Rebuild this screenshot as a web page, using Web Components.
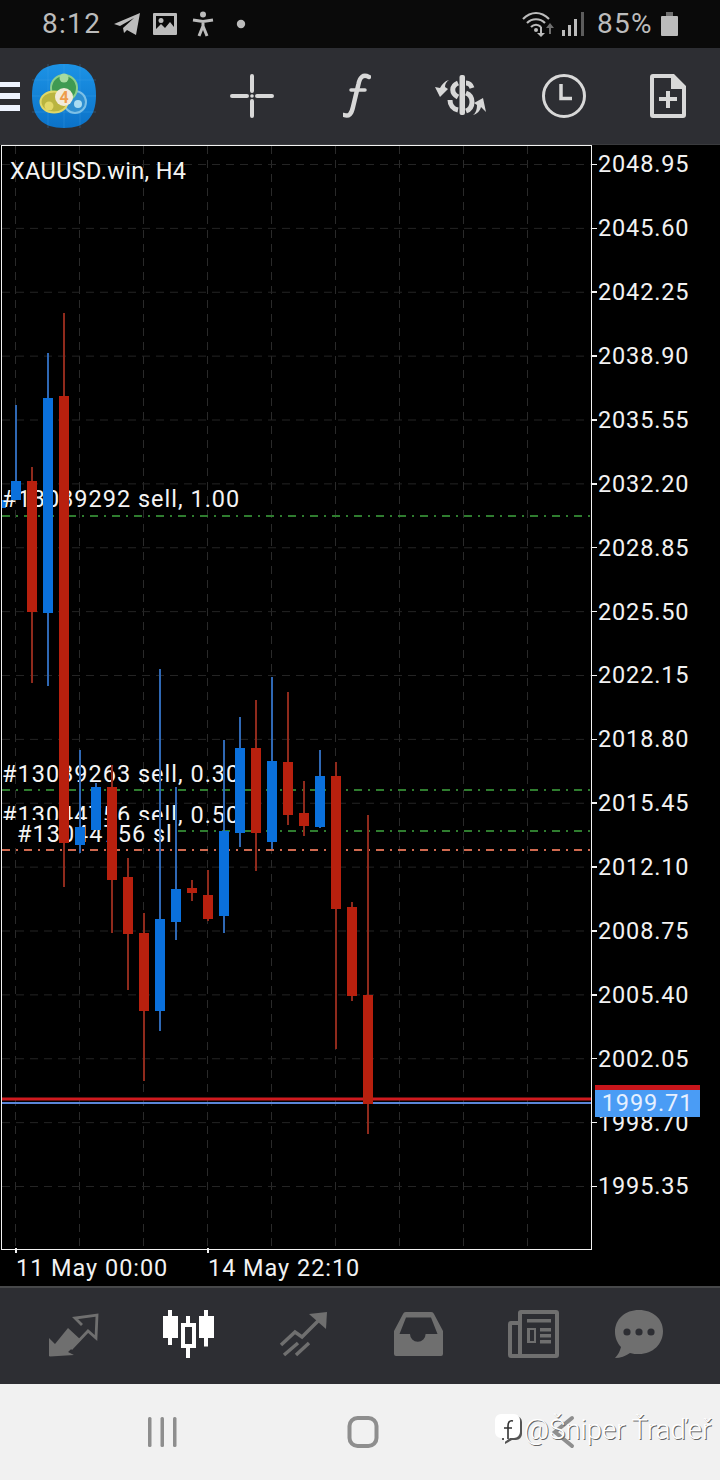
<!DOCTYPE html>
<html>
<head>
<meta charset="utf-8">
<style>
html,body{margin:0;padding:0;background:#000;}
body{width:720px;height:1480px;overflow:hidden;font-family:Roboto,"Liberation Sans",sans-serif;}
</style>
</head>
<body>
<mt-app>
  <status-bar></status-bar>
  <tool-bar></tool-bar>
  <chart-view></chart-view>
  <tab-bar></tab-bar>
  <nav-bar></nav-bar>
</mt-app>
<script>
class MtApp extends HTMLElement{
  constructor(){
    super();
    this.attachShadow({mode:'open'});
    this.shadowRoot.innerHTML=`<style>:host{display:flex;flex-direction:column;width:720px;height:1480px;}</style><slot></slot>`;
  }
}
customElements.define('mt-app',MtApp);

const statusTpl=document.createElement('template');
statusTpl.innerHTML=`
<style>
:host{display:flex;align-items:center;height:48px;background:#0a0a0a;color:#bcbcbc;font:28px Roboto,sans-serif;position:relative;}
.time{margin-left:42px;width:58px;margin-top:-2px;letter-spacing:1.300px;}
svg{display:block;flex:none;}
.pct{margin-left:12px;width:56px;margin-top:-2px;letter-spacing:1.300px;white-space:nowrap;}
</style>
<span class="time">8:12</span>
<svg style="margin-left:14px" width="26" height="22" viewBox="0 0 26 22"><path fill="#bcbcbc" d="M0 11 26 0 22 22 13 17 10 20 9 15 20 5 6 13Z"/></svg>
<svg style="margin-left:13px" width="24" height="22" viewBox="0 0 24 22"><path fill="#bcbcbc" fill-rule="evenodd" d="M1 0H23a1 1 0 0 1 1 1V21a1 1 0 0 1-1 1H1a1 1 0 0 1-1-1V1a1 1 0 0 1 1-1ZM3 3V16L8 11l4 4 5-6 4 5V3Z"/><circle cx="8" cy="7.5" r="2.5" fill="#bcbcbc"/></svg>
<svg style="margin-left:15px" width="22" height="26" viewBox="0 0 22 26"><circle cx="11" cy="3.5" r="3" fill="#bcbcbc"/><path fill="none" stroke="#bcbcbc" stroke-width="3" d="M1 9 11 10.500 21 9M11 10V16M11 15 7 25M11 15 15 25"/></svg>
<svg style="margin-left:22px" width="10" height="10" viewBox="0 0 10 10"><circle cx="5" cy="5" r="4.200" fill="#bcbcbc"/></svg>
<span style="flex:1"></span>
<svg width="33" height="26" viewBox="0 0 33 26"><g fill="none" stroke="#bcbcbc" stroke-width="2.200"><path d="M1 8C9 0 19 0 27 8M5 12C10 7 18 7 23 12M9 16C12 13 16 13 19 16"/></g><circle cx="14" cy="19" r="2" fill="#bcbcbc"/><path fill="#bcbcbc" d="M18 16h2v6h3l-4 4-4-4h3Z"/><path fill="#6f6f6f" d="M28 12l4 5h-3v6h-2v-6h-3Z"/></svg>
<svg style="margin-left:7px" width="23" height="24" viewBox="0 0 23 24"><path fill="#bcbcbc" d="M0 18h3v6H0ZM6 13h3v11H6ZM12 7h3v17h-3Z"/><path fill="#5c5c5c" d="M19 0h3v24h-3Z"/></svg>
<span class="pct">85%</span>
<svg style="margin-left:8px;margin-right:42px" width="17" height="24" viewBox="0 0 17 24"><path fill="#bcbcbc" d="M1 4H16a1 1 0 0 1 1 1V23a1 1 0 0 1-1 1H1a1 1 0 0 1-1-1V5a1 1 0 0 1 1-1Z"/><path fill="#6f6f6f" d="M5 0h7v4H5Z"/></svg>
`;
class StatusBar extends HTMLElement{
  constructor(){
    super();
    this.attachShadow({mode:'open'});
    this.shadowRoot.appendChild(statusTpl.content.cloneNode(true));
  }
}
customElements.define('status-bar',StatusBar);

const toolTpl=document.createElement('template');
toolTpl.innerHTML=`
<style>
:host{display:flex;align-items:center;height:96px;background:#2d2e33;position:relative;}
.ham{width:20px;height:29px;display:flex;flex-direction:column;justify-content:space-between;}
.ham i{display:block;height:5.500px;background:#eef4ff;}
svg{display:block;flex:none;}
</style>
<div class="ham"><i></i><i></i><i></i></div>
<svg style="margin-left:12px" width="64" height="64" viewBox="0 0 64 64">
  <defs>
    <linearGradient id="lg" x1="0" y1="0" x2="0" y2="1"><stop offset="0" stop-color="#1c93e6"/><stop offset="1" stop-color="#0b72c8"/></linearGradient>
  </defs>
  <path fill="url(#lg)" d="M32 0C54 0 64 10 64 31C64 53 54 64 32 64C10 64 0 53 0 31C0 10 10 0 32 0Z"/>
  <path stroke="#4aa8ea" stroke-opacity=".35" stroke-width=".8" d="M0 16H64M0 32H64M0 48H64M16 0V64M32 0V64M48 0V64"/>
  <ellipse cx="43" cy="38" rx="11" ry="11" fill="#2f8fd0" stroke="#7cc0e6" stroke-width="2"/>
  <circle cx="46" cy="40" r="4" fill="#a9dcf2"/>
  <ellipse cx="32" cy="24" rx="13" ry="13" fill="#3f9a52" stroke="#8ccf8c" stroke-width="2"/>
  <circle cx="32" cy="14" r="4.500" fill="#a6dba0"/>
  <ellipse cx="22" cy="38" rx="13.500" ry="10.500" fill="#b9b440" stroke="#e0d868" stroke-width="2"/>
  <circle cx="17" cy="42" r="4.500" fill="#e2d868"/>
  <circle cx="32" cy="33" r="9" fill="#f1ead9"/>
  <text x="32" y="39" text-anchor="middle" font-family="Roboto,sans-serif" font-size="16" font-weight="700" fill="#ee9c4a">4</text>
</svg>
<svg style="margin-left:134px" width="44" height="44" viewBox="0 0 44 44"><g stroke="#d8d8d8" stroke-width="4" stroke-linecap="round"><path d="M2 22H17M27 22H42M22 2V17M22 27V42"/></g><circle cx="22" cy="22" r="1.800" fill="#d8d8d8"/></svg>
<svg style="margin-left:69px" width="28" height="46" viewBox="0 0 28 46"><path fill="none" stroke="#d8d8d8" stroke-width="4.500" stroke-linecap="round" d="M26 4C20 1 17 4 15.500 11L10 34C8.500 41 6 44 1 42"/><path stroke="#d8d8d8" stroke-width="3.500" stroke-linecap="round" d="M8 17H22"/></svg>
<svg style="margin-left:62px" width="54" height="42" viewBox="0 0 54 42">
  <rect x="26.500" y="0" width="5.500" height="40" rx="2" fill="#d8d8d8"/>
  <g fill="none" stroke="#d8d8d8" stroke-width="5"><path d="M25 8C18 11 18 18 25 22"/><path d="M33 8C36 8 38 10 39 13"/><path d="M33 18C41 21 41 33 33 36"/><path d="M17 25C17 30 20 34 25 35"/></g>
  <path fill="#d8d8d8" d="M16 5C13 7 12 9 12 12L15 14 7 22 2 12 7 13C9 9 12 6 16 5Z"/>
  <path fill="#d8d8d8" d="M40 40C43 38 44 34 44 30L41 28 50 23 53 37 48 32C47 36 44 39 40 40Z"/>
</svg>
<svg style="margin-left:55px" width="44" height="44" viewBox="0 0 44 44"><circle cx="22" cy="22" r="20.500" fill="none" stroke="#d8d8d8" stroke-width="3"/><path fill="none" stroke="#d8d8d8" stroke-width="3.500" d="M19 10V24.500H30"/></svg>
<svg style="margin-left:64px" width="36" height="44" viewBox="0 0 36 44"><path fill="#d8d8d8" fill-rule="evenodd" d="M3 0H24L36 12V41a3 3 0 0 1-3 3H3a3 3 0 0 1-3-3V3a3 3 0 0 1 3-3ZM4 4V40H32V15H21V4Z"/><path fill="#d8d8d8" d="M16 17h4v6h7v4h-7v7h-4v-7H9v-4h7Z"/></svg>
`;
class ToolBar extends HTMLElement{
  constructor(){
    super();
    this.attachShadow({mode:'open'});
    this.shadowRoot.appendChild(toolTpl.content.cloneNode(true));
  }
}
customElements.define('tool-bar',ToolBar);

// x, wick top, wick bottom, body top, body bottom, colour
const CANDLES=[
 [16,405,481,481,500,'b'],[32,467,683,481,612,'r'],[48,353,686,398,613,'b'],[64,313,887,396,843,'r'],
 [80,750,853,827,845,'b'],[96,783,830,787,830,'b'],[112,765,933,787,880,'r'],[128,858,990,877,934,'r'],
 [144,913,1081,933,1011,'r'],[160,669,1031,919,1011,'b'],[176,787,940,889,922,'b'],[192,880,901,888,893,'r'],
 [208,870,921,895,919,'r'],[224,740,933,831,916,'b'],[240,717,847,748,833,'b'],[256,700,871,748,833,'r'],
 [272,677,849,761,842,'b'],[288,692,825,762,815,'r'],[304,781,836,813,826,'r'],[320,750,828,776,827,'b'],
 [336,762,1049,776,909,'r'],[352,902,1001,907,996,'r'],[368,815,1134,995,1104,'r']
];
const PRICES=['2048.95','2045.60','2042.25','2038.90','2035.55','2032.20','2028.85','2025.50','2022.15','2018.80','2015.45','2012.10','2008.75','2005.40','2002.05','1998.70','1995.35'];

const chartTpl=document.createElement('template');
chartTpl.innerHTML=`
<style>
:host{display:flex;flex-direction:column;height:1142px;background:#000;color:#f2f2f2;font:23.500px Roboto,sans-serif;position:relative;border-top:1px solid #3a3b3e;box-sizing:border-box;}
.top{display:flex;height:1105px;padding-left:1px;}
.plot{width:589px;height:1103px;border:1px solid #f2f2f2;flex:none;}
.plot svg{display:block;}
.plot text{font:23.500px Roboto,sans-serif;fill:#f4f4f4;letter-spacing:1px;}
.plot text.title{letter-spacing:.35px;}
.axis{position:relative;flex:1;display:grid;grid-auto-rows:63.875px;margin-top:-12.500px;}
.axis div{display:flex;align-items:center;height:63.875px;}
.axis i{display:block;width:5px;height:1.500px;background:#f2f2f2;}
.axis span{letter-spacing:.85px;padding-left:1px;}
.axis .last{position:absolute;display:block;left:3px;top:952.500px;width:105px;height:32px;border-top:5px solid #c8151b;box-sizing:border-box;background:#4a9cf5;color:#e6f0ff;letter-spacing:.85px;line-height:27px;text-align:center;}
.times{position:relative;display:flex;height:36px;}
.times span{position:absolute;top:3px;letter-spacing:.95px;line-height:30px;white-space:nowrap;}
.times i{position:absolute;top:-2px;width:1.500px;height:5px;background:#f2f2f2;}
</style>
<div class="top">
  <div class="plot"></div>
  <div class="axis"></div>
</div>
<div class="times">
  <i style="left:15px"></i><span style="left:16px">11 May 00:00</span>
  <i style="left:207px"></i><span style="left:208px">14 May 22:10</span>
</div>
`;
class ChartView extends HTMLElement{
  constructor(){
    super();
    this.attachShadow({mode:'open'});
    this.shadowRoot.appendChild(chartTpl.content.cloneNode(true));
    this.shadowRoot.querySelector('.plot').innerHTML=this.plot();
    const ax=this.shadowRoot.querySelector('.axis');
    ax.innerHTML=PRICES.map(p=>`<div><i></i><span>${p}</span></div>`).join('')+`<div class="last">1999.71</div>`;
  }
  plot(){
    let s=`<svg width="589" height="1103" viewBox="2 146 589 1103">`;
    let g='',h='';
    for(let x=15.5;x<590;x+=64) g+=`M${x} 146V1249`;
    for(let i=0;i<17;i++){const y=164.5+i*63.875; h+=`M2 ${y}H591`;}
    s+=`<path d="${g}" stroke="#2a2a2a" stroke-width="1" stroke-dasharray="8 6" fill="none"/>`;
    s+=`<path d="${h}" stroke="#242424" stroke-width="1" stroke-dasharray="8 6" fill="none"/>`;
    s+=`<rect x="2" y="500" width="4" height="8" fill="#0a6fdc"/>`;
    s+=`<text x="2" y="507">#13089292 sell, 1.00</text>`;
    s+=`<text x="2" y="782">#13089263 sell, 0.30</text>`;
    s+=`<text x="2" y="823">#13044756 sell, 0.50</text>`;
    const dash='stroke-width="2" stroke-dasharray="8 6 2 6" fill="none"';
    s+=`<path d="M2 516H591M2 790H591M2 831H591" stroke="#2f7d2f" ${dash}/>`;
    s+=`<path d="M2 850H591" stroke="#d0694f" ${dash}/>`;
    s+=`<rect x="2" y="820" width="176" height="28" fill="#000"/>`;
    s+=`<text x="17" y="842">#13044756 sl</text>`;
    s+=`<path d="M2 1099H591" stroke="#cf1a1f" stroke-width="3"/>`;
    s+=`<path d="M2 1103H591" stroke="#5b85d8" stroke-width="2"/>`;
    for(const c of CANDLES){
      const body=c[5]=='r'?'#b8200e':'#0a70dc', wick=c[5]=='r'?'#8f2a1c':'#2f68b4';
      s+=`<rect x="${c[0]-1}" y="${c[1]}" width="2" height="${c[2]-c[1]}" fill="${wick}"/>`;
      s+=`<rect x="${c[0]-5}" y="${c[3]}" width="10" height="${c[4]-c[3]}" fill="${body}"/>`;
    }
    s+=`<text class="title" x="10" y="179">XAUUSD.win, H4</text>`;
    return s+`</svg>`;
  }
}
customElements.define('chart-view',ChartView);

const tabTpl=document.createElement('template');
tabTpl.innerHTML=`
<style>
:host{display:block;height:98px;background:#2d2e33;border-top:2px solid #47484a;box-sizing:border-box;}
svg{display:block;}
</style>
<svg width="720" height="96" viewBox="0 1288 720 96">
  <g fill="#6f6f6f">
    <path d="M49 1356V1338L55 1344 68 1328 81 1340 68 1352 74 1355 50 1356.500Z"/>
    <path fill="none" stroke="#6f6f6f" stroke-width="2.800" d="M82 1325 75 1318 97 1315 96 1338 88 1331 71 1349"/>
    <path d="M163 1316h5v-6h4v6h6v22h-6v7h-4v-7h-5Z" fill="#fff"/>
    <path d="M199 1316h5v-6h4v6h6v22h-6v8.500h-4V1338h-5Z" fill="#fff"/>
    <path fill="#fff" fill-rule="evenodd" d="M181 1323h5v-7h4v7h6v25h-6v10h-4v-10h-5ZM185 1327v17h7v-17Z"/>
    <path fill="none" stroke="#6f6f6f" stroke-width="3.500" d="M281 1345 295 1332 302 1337 323 1316M284 1355 298 1343M296 1355 309 1343"/>
    <path d="M309 1314 327 1312 326 1329Z"/>
    <path fill-rule="evenodd" d="M396 1356a2 2 0 0 1-2-2V1331L403 1314a3 3 0 0 1 3-2H431a3 3 0 0 1 3 2L443 1331V1354a2 2 0 0 1-2 2ZM399.500 1334H410a7.800 7.800 0 0 0 15.600 0H437.500L431 1317.500H406Z"/>
    <path fill-rule="evenodd" d="M521 1310H556a3 3 0 0 1 3 3V1355a3 3 0 0 1-3 3H511a3 3 0 0 1-3-3V1324a3 3 0 0 1 3-3H518V1313a3 3 0 0 1 3-3ZM522 1314V1354H555V1314ZM518 1325H512V1354H518Z"/>
    <path d="M527 1319h24v3.500h-24ZM527 1328h9v15h-9ZM540 1328h11v3.500h-11ZM540 1334h11v3.500h-11ZM540 1340h11v3.500h-11Z"/>
    <path d="M639 1310C653 1310 663 1319 663 1331C663 1344 653 1354 639 1354C636 1354 633 1354 630 1353C626 1356 620 1358 615 1358C618 1355 620 1351 621 1347C617 1343 615 1337 615 1332C615 1319 625 1310 639 1310Z"/>
  </g>
  <path fill="#2d2e33" d="M530 1330h4v11h-4Z"/>
  <g fill="#2d2e33"><circle cx="627" cy="1332" r="3.600"/><circle cx="639" cy="1332" r="3.600"/><circle cx="651" cy="1332" r="3.600"/></g>
</svg>
`;
class TabBar extends HTMLElement{
  constructor(){
    super();
    this.attachShadow({mode:'open'});
    this.shadowRoot.appendChild(tabTpl.content.cloneNode(true));
  }
}
customElements.define('tab-bar',TabBar);

const navTpl=document.createElement('template');
navTpl.innerHTML=`
<style>
:host{display:block;height:96px;background:#f1f1f1;position:relative;}
svg{display:block;}
.mark{position:absolute;left:495px;top:25px;display:flex;align-items:center;height:40px;font:300 27.500px Roboto,sans-serif;color:#fff;white-space:nowrap;text-shadow:1px 1px 0 #666;}
.mark svg{margin-right:2px;flex:none;}
</style>
<svg width="720" height="96" viewBox="0 1384 720 96">
  <g fill="#8e8e8e">
    <rect x="148" y="1417" width="3.500" height="30" rx="1.500"/>
    <rect x="160.500" y="1417" width="3.500" height="30" rx="1.500"/>
    <rect x="173" y="1417" width="3.500" height="30" rx="1.500"/>
  </g>
  <rect x="349.500" y="1418" width="27" height="28" rx="8" fill="none" stroke="#8e8e8e" stroke-width="4"/>
  <path d="M572 1418 555 1432 572 1446" fill="none" stroke="#8e8e8e" stroke-width="4" stroke-linecap="round"/>
</svg>
<div class="mark">
  <svg width="27" height="30" viewBox="0 0 27 30"><path fill="#555" d="M8 2H21a6 6 0 0 1 6 6V20a6 6 0 0 1-6 6H17L10 30V26H7Z"/><path fill="#fff" d="M6 0H19a6 6 0 0 1 6 6V18a6 6 0 0 1-6 6H15L9 28.500V24H6a6 6 0 0 1-6-6V6a6 6 0 0 1 6-6Z"/><path fill="none" stroke="#333" stroke-width="1.600" d="M18 7C14 6 13 9 13 12V25M9 14H17"/></svg>
  <span>@Šniper Ťraďeř</span>
</div>
`;
class NavBar extends HTMLElement{
  constructor(){
    super();
    this.attachShadow({mode:'open'});
    this.shadowRoot.appendChild(navTpl.content.cloneNode(true));
  }
}
customElements.define('nav-bar',NavBar);
</script>
</body>
</html>
